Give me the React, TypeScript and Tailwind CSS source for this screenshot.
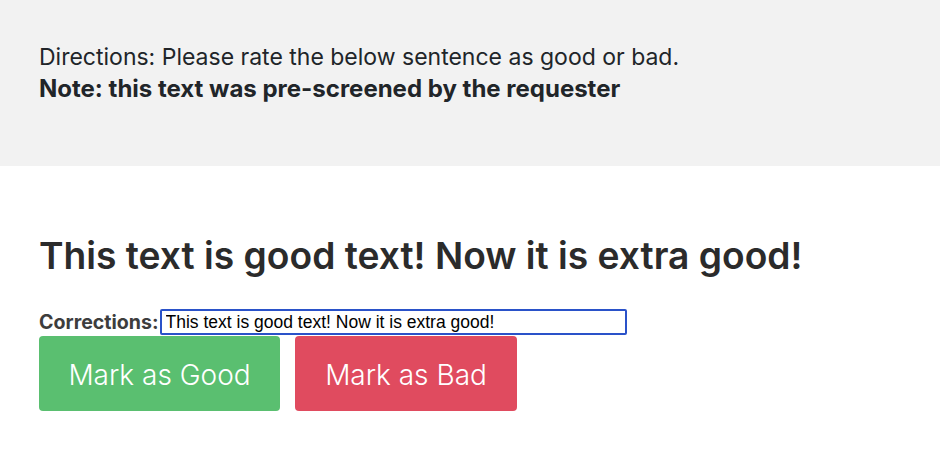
export default function App() {
  const sentence = "This text is good text! Now it is extra good!";
  return (
    <div className="min-h-[470px] bg-white text-[#212529] font-['Inter','Roboto',sans-serif]">
      <div className="bg-[#f2f2f2] h-[166px] px-[39px] pt-[42px]">
        <p className="text-[23px] leading-[31px]">
          Directions: Please rate the below sentence as good or bad.
        </p>
        <p className="text-[24px] leading-[31px] font-bold">
          Note: this text was pre-screened by the requester
        </p>
      </div>
      <div className="px-[39px] pt-[67px]">
        <h1 className="text-[37.2px] leading-[46px] font-semibold text-[#2b2b2b]">
          {sentence}
        </h1>
        <div className="mt-[30px] flex items-center">
          <label className="text-[19.6px] leading-[26px] font-bold text-[#3d3d3d]">
            Corrections:
          </label>
          <input
            className="ml-[1px] w-[467px] h-[26px] border-2 border-[#2a52c9] rounded-[2px] px-[4px] text-[17.5px] text-black outline-none font-['Liberation_Sans',sans-serif]"
            defaultValue={sentence}
          />
        </div>
        <div className="mt-[1px] flex gap-[15px]">
          <button className="w-[241px] h-[75px] bg-[#5abf70] text-white text-[28px] font-light rounded-[4px] pt-[2px]">
            Mark as Good
          </button>
          <button className="w-[222px] h-[75px] bg-[#e04b5f] text-white text-[28px] font-light rounded-[4px] pt-[2px]">
            Mark as Bad
          </button>
        </div>
      </div>
    </div>
  );
}
